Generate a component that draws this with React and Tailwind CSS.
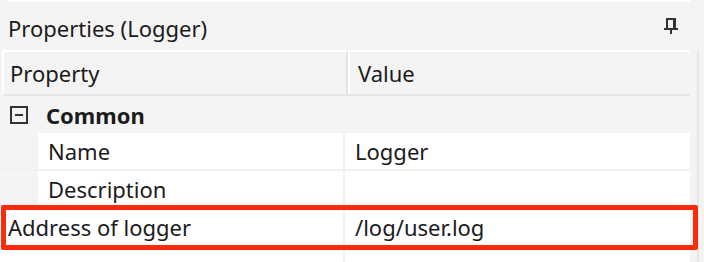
import React from 'react';

const PinIcon = () => (
  <svg width="14" height="16" viewBox="0 0 14 16" fill="#333333">
    <rect x="2" y="0" width="2" height="11" />
    <rect x="9" y="0" width="3" height="11" />
    <rect x="2" y="0" width="10" height="2" />
    <rect x="0" y="10" width="14" height="2" />
    <rect x="6" y="12" width="2" height="4" />
  </svg>
);

const CollapseIcon = () => (
  <svg width="18" height="18" viewBox="0 0 18 18">
    <rect x="1" y="1" width="16" height="16" fill="none" stroke="#333333" strokeWidth="2" />
    <rect x="5" y="8" width="8" height="2" fill="#333333" />
  </svg>
);

const PropRow = ({ label, value, indent = true }) => (
  <div className="flex h-[38px] shrink-0 border-b-2 border-[#f0f0f0]">
    {indent && <div className="w-[38px] shrink-0 bg-[#f4f4f4]" />}
    <div className={`flex items-center bg-white ${indent ? 'w-[305px] pl-[10px]' : 'w-[343px] pl-[8px]'}`}>
      {label}
    </div>
    <div className="w-[2px] bg-[#f0f0f0]" />
    <div className="flex flex-1 items-center bg-white pl-[10px]">{value}</div>
  </div>
);

export default function App() {
  return (
    <div className="relative flex h-[262px] w-[704px] overflow-hidden bg-[#f4f4f4] font-['Noto_Sans',sans-serif] text-[22px] leading-none text-[#1b1b1b]">
      <div className="flex w-[690px] shrink-0 flex-col">
        <div className="ml-[8px] h-[2px] shrink-0 bg-white" />
        <div className="flex h-[48px] shrink-0 items-center justify-between pl-[8px] pr-[12px]">
          <span className="pt-[4px]">Properties (Logger)</span>
          <PinIcon />
        </div>

        <div className="ml-[2px] flex h-[46px] shrink-0 border-l-2 border-t-2 border-b-2 border-l-white border-t-white border-b-[#e6e6e6]">
          <div className="flex w-[342px] items-center pl-[6px]">Property</div>
          <div className="w-[2px] bg-[#e3e3e3]" />
          <div className="w-[2px] bg-white" />
          <div className="flex flex-1 items-center pl-[8px]">Value</div>
        </div>

        <div className="flex h-[37px] shrink-0 items-center">
          <div className="ml-[10px] flex w-[36px] items-center">
            <CollapseIcon />
          </div>
          <span className="font-bold">Common</span>
        </div>

        <PropRow label="Name" value="Logger" />
        <PropRow label="Description" value="" />
        <PropRow label="Address of logger" value="/log/user.log" indent={false} />
        <PropRow label="" value="" indent={false} />
      </div>

      <div className="mt-[50px] ml-[7px] w-[2px] bg-[#e6e6e6]" />

      <div className="pointer-events-none absolute left-[1px] top-[205px] h-[45px] w-[697px] rounded-[2px] border-[5px] border-[#ff2a0a]" />
    </div>
  );
}
